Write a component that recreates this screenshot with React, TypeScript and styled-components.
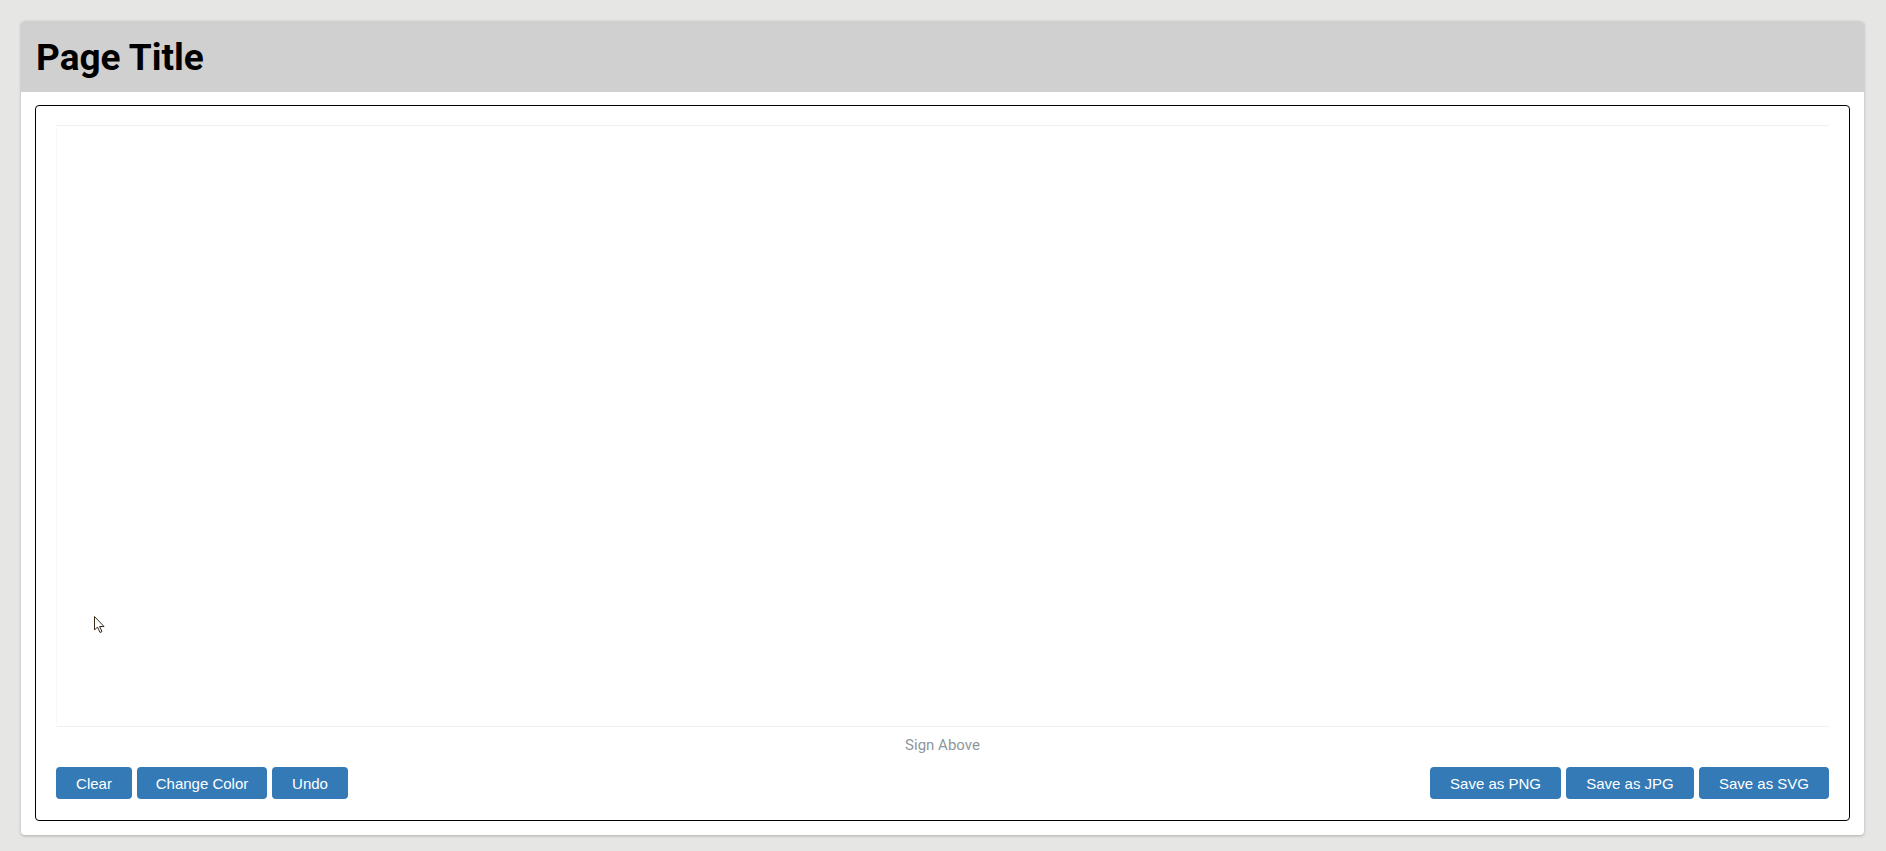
import React, { FC } from 'react';
import styled, { createGlobalStyle } from 'styled-components';

const GlobalStyle = createGlobalStyle`
  html, body {
    margin: 0;
    padding: 0;
    background: #e6e6e5;
    font-family: Roboto, "Liberation Sans", Arial, sans-serif;
  }
`;

const Page = styled.div`
  padding: 21px 22px 15px 21px;
  min-height: 851px;
  box-sizing: border-box;
`;

const Card = styled.div`
  background: #ffffff;
  border-radius: 4px;
  box-shadow: 0 1px 3px rgba(0, 0, 0, 0.25);
  overflow: hidden;
`;

const Header = styled.header`
  background: #d0d0d0;
  height: 71px;
  display: flex;
  align-items: center;
  padding: 0 15px;
`;

const Title = styled.h1`
  margin: 0;
  font-family: Roboto, "Liberation Sans", sans-serif;
  font-weight: 700;
  font-size: 37px;
  color: #000;
  line-height: 1;
  padding-top: 2px;
`;

const Body = styled.div`
  padding: 13px 14px 14px 14px;
`;

const PadFrame = styled.div`
  position: relative;
  border: 1px solid #000;
  border-radius: 4px;
  padding: 19px 20px 21px 20px;
`;

const Canvas = styled.div`
  height: 600px;
  border-top: 1px solid #f0f0f0;
  border-bottom: 1px solid #f0f0f0;
  border-left: 1px solid #f8f8f8;
`;

const Caption = styled.div`
  text-align: center;
  color: #8d979c;
  font-size: 15px;
  margin-top: 10px;
  height: 16px;
  line-height: 16px;
`;

const Toolbar = styled.div`
  display: flex;
  justify-content: space-between;
  margin-top: 14px;
`;

const Group = styled.div`
  display: flex;
  gap: 5px;
`;

const Button = styled.button<{ $width: number }>`
  width: ${(p) => p.$width}px;
  height: 32px;
  border: none;
  border-radius: 4px;
  background: #337ab7;
  color: #fff;
  font-family: "Liberation Sans", Arial, sans-serif;
  font-size: 15px;
  padding: 0;
  cursor: pointer;
`;

const Cursor = styled.svg`
  position: absolute;
  left: 58px;
  top: 510px;
`;

const leftButtons = [
  { label: 'Clear', width: 76 },
  { label: 'Change Color', width: 130 },
  { label: 'Undo', width: 76 },
];

const rightButtons = [
  { label: 'Save as PNG', width: 131 },
  { label: 'Save as JPG', width: 128 },
  { label: 'Save as SVG', width: 130 },
];

const App: FC = () => (
  <>
    <GlobalStyle />
    <Page>
      <Card>
        <Header>
          <Title>Page Title</Title>
        </Header>
        <Body>
          <PadFrame>
            <Canvas />
            <Caption>Sign Above</Caption>
            <Toolbar>
              <Group>
                {leftButtons.map((b) => (
                  <Button key={b.label} $width={b.width}>
                    {b.label}
                  </Button>
                ))}
              </Group>
              <Group>
                {rightButtons.map((b) => (
                  <Button key={b.label} $width={b.width}>
                    {b.label}
                  </Button>
                ))}
              </Group>
            </Toolbar>
            <Cursor width="12" height="18" viewBox="0 0 12 18">
              <path
                d="M0.5 0.5 L0.5 14 L3.5 11 L6 16.5 L8 15.5 L5.5 10.5 L10 10.5 Z"
                fill="#fff"
                stroke="#3a2a1a"
                strokeWidth="1"
              />
            </Cursor>
          </PadFrame>
        </Body>
      </Card>
    </Page>
  </>
);

export default App;
